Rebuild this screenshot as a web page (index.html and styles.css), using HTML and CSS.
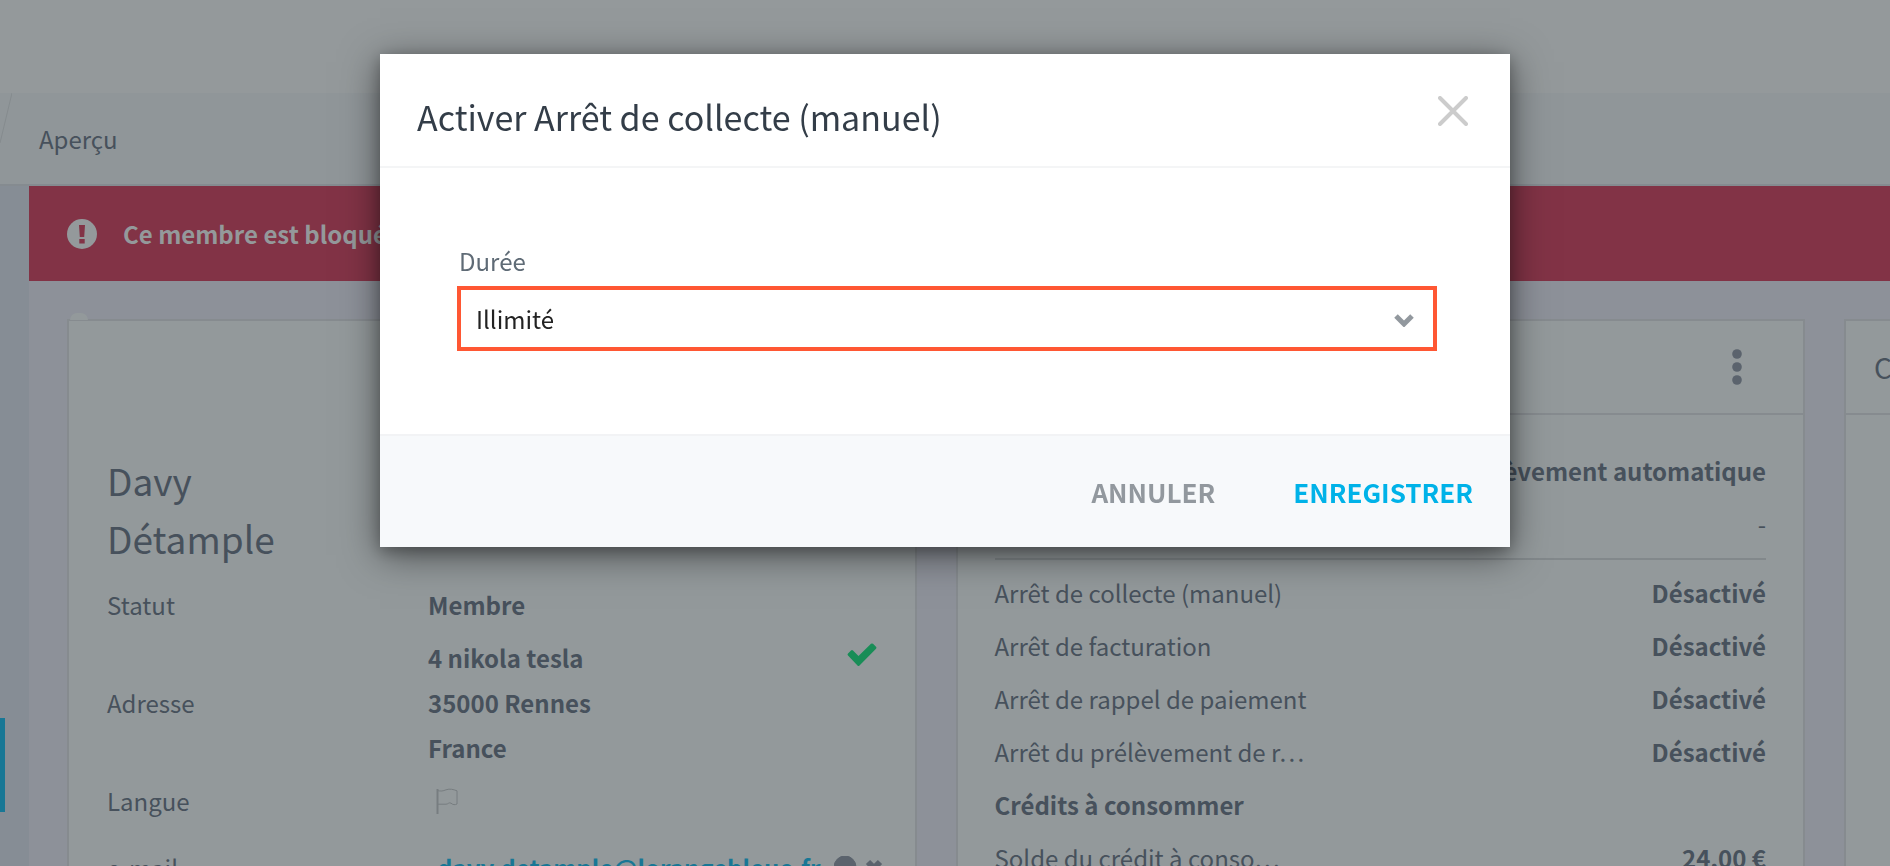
FILE: index.html
```html
<!DOCTYPE html>
<html lang="fr">
<head>
<meta charset="utf-8">
<title>Aperçu du membre</title>
<link rel="stylesheet" href="styles.css">
</head>
<body>
<div class="page">
  <header class="topbar"></header>
  <nav class="crumbs" aria-label="Fil d'Ariane">
    <svg class="crumb-slash" viewBox="0 0 12 91" aria-hidden="true"><path d="M12 0 0 50"/></svg>
    <span class="crumb">Aperçu</span>
  </nav>
  <div class="shell">
    <aside class="rail"><div class="rail-active"></div></aside>
    <main class="content">
      <div class="alert">
        <svg class="alert-icon" viewBox="0 0 30 30" aria-hidden="true"><circle cx="15" cy="15" r="15"/><path d="M12 6h6l-.8 12h-4.400zM12.300 20h5.400v4.600h-5.400z"/></svg>
        <strong>Ce membre est bloqué</strong>
      </div>
      <div class="cards">
        <section class="card member">
          <span class="avatar"></span>
          <h2 class="name">Davy<br>Détample</h2>
          <dl class="facts">
            <div class="fact"><dt>Statut</dt><dd>Membre</dd></div>
            <div class="fact address"><dt>Adresse</dt><dd>4 nikola tesla<br>35000 Rennes<br>France</dd>
              <svg class="check" viewBox="0 0 30 24" aria-hidden="true"><path d="M1 12.500Q0 11.500 1 10.500L4 7.500Q5 6.500 6 7.500L11.500 13 24 .8Q25 0 26 .8L29 3.800Q30 4.800 29 5.800L12.500 22.500Q11.500 23.500 10.500 22.500z"/></svg>
            </div>
            <div class="fact"><dt>Langue</dt><dd><svg class="flag" viewBox="0 0 22 26" aria-hidden="true"><path d="M1.500 26V1" stroke-width="2"/><path d="M1 2.500c4 1 6 .5 9-.7 4-1.300 7-.5 11 1V16c-2 1-4 1-6-.8-2-1.200-3 1-5 1H1"/></svg></dd></div>
            <div class="fact mail"><dt>e-mail</dt><dd><a href="#">davy.detample@lorangebleue.fr</a>
              <svg class="mail-icons" viewBox="0 0 50 22" aria-hidden="true"><circle cx="11" cy="11" r="11"/><path d="m34 6 12 12M46 6 34 18"/></svg></dd></div>
          </dl>
        </section>
        <section class="card">
          <header class="card-head">
            <button class="more" type="button" aria-label="Plus d'options"><svg viewBox="0 0 10 36" aria-hidden="true"><circle cx="5" cy="5" r="4.800"/><circle cx="5" cy="18" r="4.800"/><circle cx="5" cy="31" r="4.800"/></svg></button>
          </header>
          <div class="card-body">
            <dl class="rows summary">
              <div class="row"><dt></dt><dd>Prélèvement automatique</dd></div>
              <div class="row"><dt></dt><dd class="plain">-</dd></div>
            </dl>
            <dl class="rows">
              <div class="row"><dt>Arrêt de collecte (manuel)</dt><dd>Désactivé</dd></div>
              <div class="row"><dt>Arrêt de facturation</dt><dd>Désactivé</dd></div>
              <div class="row"><dt>Arrêt de rappel de paiement</dt><dd>Désactivé</dd></div>
              <div class="row"><dt>Arrêt du prélèvement de r…</dt><dd>Désactivé</dd></div>
              <div class="row"><dt class="strong">Crédits à consommer</dt></div>
              <div class="row"><dt>Solde du crédit à conso…</dt><dd>24,00 €</dd></div>
            </dl>
          </div>
        </section>
        <section class="card">
          <header class="card-head"><h3 class="card-title">C</h3></header>
        </section>
      </div>
    </main>
  </div>
</div>

<div class="overlay">
  <form class="modal" role="dialog" aria-labelledby="modal-title">
    <header class="modal-head">
      <h1 class="modal-title" id="modal-title">Activer Arrêt de collecte (manuel)</h1>
      <button class="close" type="button" aria-label="Fermer"><svg viewBox="0 0 30 30" aria-hidden="true"><path d="m2 2 26 26M28 2 2 28"/></svg></button>
    </header>
    <div class="modal-body">
      <label class="label" for="duree">Durée</label>
      <div class="field">
        <select class="select" id="duree"><option>Illimité</option></select>
        <svg class="chevron" viewBox="0 0 20 14" aria-hidden="true"><path d="m2 3 8 8 8-8"/></svg>
      </div>
    </div>
    <footer class="modal-foot">
      <button class="action" type="button">ANNULER</button>
      <button class="action primary" type="submit">ENREGISTRER</button>
    </footer>
  </form>
</div>
</body>
</html>
```
FILE: styles.css
```css
* { box-sizing: border-box; }
body, h1, h2, h3, dl, dd { margin: 0; }
body {
  background: #8d9199;
  color: #47515c;
  font: 24px/52px "Noto Sans CJK SC", "Noto Sans", sans-serif;
  overflow: hidden;
}
button, select { font: inherit; }
button { padding: 0; border: 0; background: none; }

.page { display: flex; flex-direction: column; height: 100vh; overflow: hidden; }
.topbar { flex: none; height: 93px; background: #94999b; }
.crumbs {
  flex: none; display: flex; align-items: center; gap: 27px; height: 93px;
  background: #909699; border-bottom: 2px solid #858b90;
}
.crumb-slash { width: 12px; height: 91px; fill: none; stroke: #858b8e; stroke-width: 1; }
.shell { flex: 1; display: flex; min-height: 0; }
.rail { flex: none; width: 29px; padding-top: 532px; background: #868d95; }
.rail-active { width: 5px; height: 94px; background: #187795; }
.content { flex: 1; min-width: 0; overflow: hidden; }
.alert {
  display: flex; align-items: center; gap: 26px; height: 95px; padding-left: 38px;
  background: #823346; color: #94999b;
}
.alert-icon { width: 30px; height: 30px; fill: #94999b; }
.alert-icon path { fill: #823346; }

.cards {
  display: grid; grid-auto-flow: column; grid-auto-columns: 46.6%; gap: 39px;
  padding: 38px 0 0 38px;
}
.card { position: relative; min-height: 600px; background: #93999b; border: 2px solid #868b8f; }
.card-head {
  display: flex; align-items: center; justify-content: flex-end;
  height: 94px; padding: 0 28px; border-bottom: 2px solid #868b8f;
}
.card-title { flex: 1; font-size: 28px; font-weight: 400; }
.more { margin-right: 33px; }
.more svg { display: block; width: 10px; height: 36px; fill: #5b636d; }
.card-body { padding: 29px 37px 0; }
.summary { padding-bottom: 8px; margin-bottom: 6px; border-bottom: 2px solid #82888b; }
.row { display: flex; justify-content: space-between; height: 53px; line-height: 53px; white-space: nowrap; }
dd, .strong { font-weight: 700; }
.plain { font-weight: 400; }

.member { padding: 130px 38px 0; }
.avatar { position: absolute; top: -8px; left: 1px; width: 18px; height: 7px; border-radius: 9px 9px 0 0; background: #93999b; }
.name { margin-bottom: 11px; font-size: 37px; line-height: 58px; font-weight: 400; }
.fact { display: flex; align-items: center; min-height: 53px; line-height: 45px; }
.fact dt { flex: none; width: 321px; }
.address { padding: 4px 0; }
.check { align-self: flex-start; width: 30px; height: 24px; margin: 8px 0 0 auto; fill: #198d57; }
.flag { display: block; width: 22px; height: 26px; margin-left: 8px; fill: none; stroke: #777d80; stroke-width: 1; }
.mail { min-height: 80px; }
.mail dd { display: flex; align-items: center; gap: 14px; padding-left: 9px; }
.mail a { color: #187795; text-decoration: none; }
.mail-icons { width: 50px; height: 22px; fill: #5b636d; stroke: #5b636d; }
.mail-icons path { stroke-width: 6; }

.overlay { position: fixed; inset: 0; display: flex; justify-content: center; align-items: flex-start; padding: 54px 20px; }
.modal {
  width: 100%; max-width: 1130px; background: #fff;
  box-shadow: 0 8px 36px rgba(0, 0, 0, .5), 0 4px 14px rgba(0, 0, 0, .25);
}
.modal-head {
  display: flex; justify-content: space-between; align-items: center;
  height: 114px; padding: 14px 42px 0 37px; border-bottom: 2px solid #f4f5f6;
}
.modal-title { color: #333d48; font-size: 34px; font-weight: 400; }
.close { margin-bottom: 12px; }
.close svg { display: block; width: 30px; height: 30px; fill: none; stroke: #ccc; stroke-width: 4; stroke-linecap: round; }
.modal-body { padding: 68px 73px 83px 77px; }
.label { display: block; padding-left: 2px; line-height: 50px; color: #5f6b76; }
.field { position: relative; }
.select {
  display: block; width: 100%; height: 65px; padding: 0 15px; appearance: none;
  border: 4px solid #ff5733; border-radius: 0; background: #fff; color: #222;
}
.chevron { position: absolute; top: 27px; right: 23px; width: 20px; height: 14px; fill: none; stroke: #92989e; stroke-width: 5; pointer-events: none; }
.modal-foot {
  display: flex; justify-content: flex-end; align-items: center; gap: 78px;
  height: 113px; padding: 0 37px; background: #f7f9fb; border-top: 2px solid #f2f3f5;
}
.action { color: #92989e; font-size: 26px; font-weight: 700; }
.primary { color: #00b2e8; }
```
